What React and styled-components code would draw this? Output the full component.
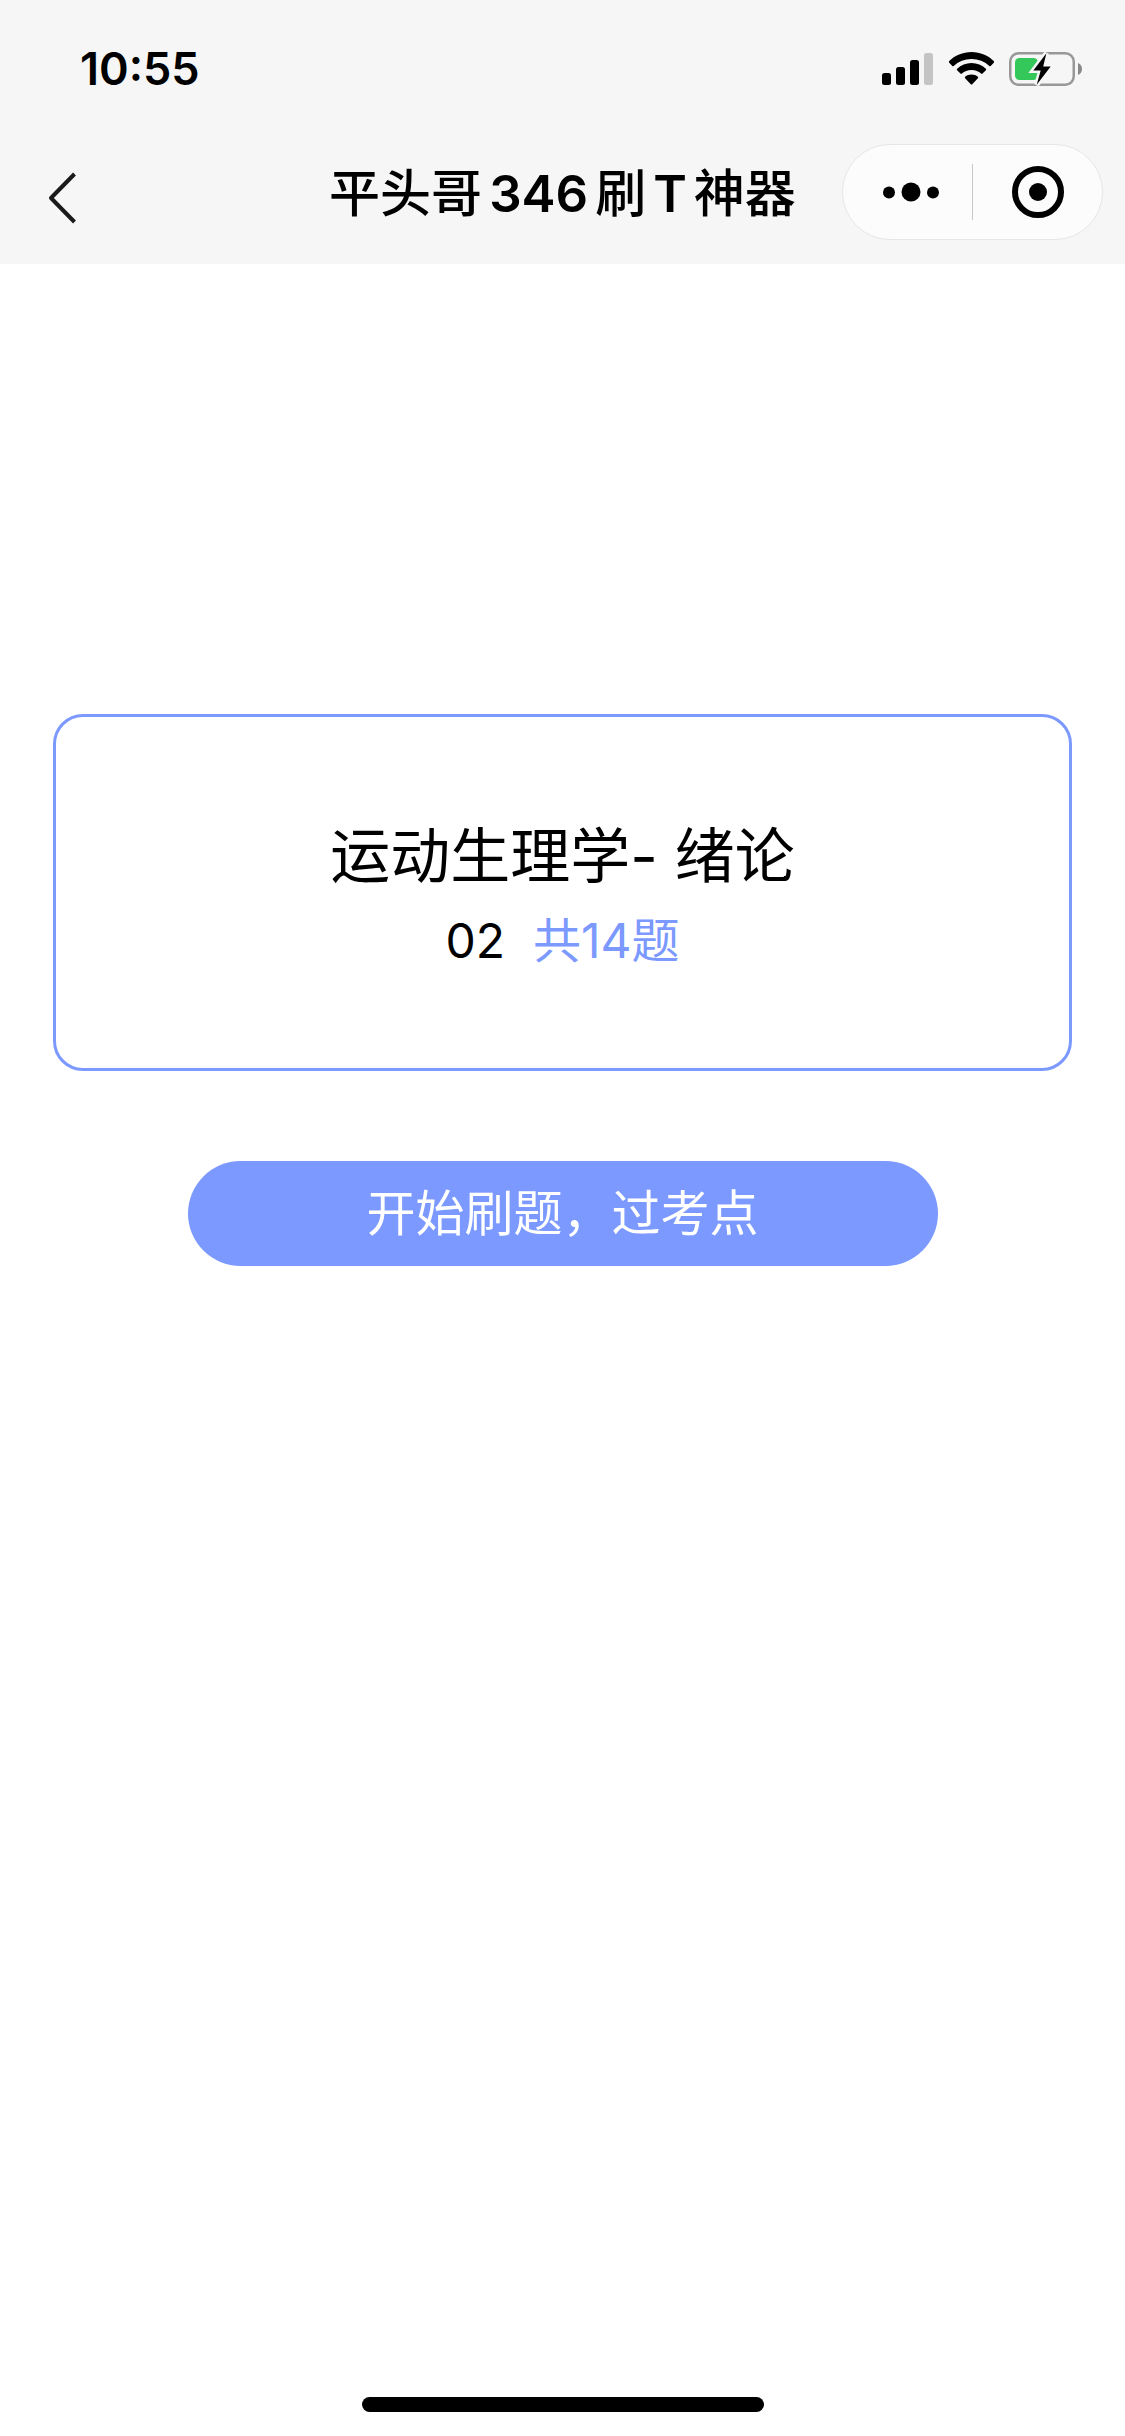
import React from 'react'
import styled, { createGlobalStyle, ThemeProvider } from 'styled-components'

const theme = {
  primary: '#7b99ff',
  barColor: '#f6f6f6',
  capsuleColor: '#fcfcfc',
  capsuleBorder: '#e6e6e6',
  dividerColor: '#c8c8c8',
  fontColor: '#000',
}

const GlobalStyle = createGlobalStyle`
  * {
    box-sizing: border-box;
  }

  body {
    margin: 0;
    background: white;
    font-family: Inter, 'Noto Sans CJK SC', sans-serif;
  }

  button {
    margin: 0;
    padding: 0;
    border: 0;
    background: none;
    color: inherit;
    font: inherit;
    cursor: pointer;
  }

  svg {
    display: block;
  }
`

const Page = styled.div`
  display: flex;
  flex-direction: column;
  min-height: 100vh;
  color: ${props => props.theme.fontColor};
`

const HeaderWrapper = styled.header`
  background: ${props => props.theme.barColor};
`

const StatusBar = styled.div`
  display: flex;
  justify-content: space-between;
  align-items: center;
  height: 120px;
  padding: 18px 43px 0 80px;
`

const Time = styled.time`
  font-size: 45px;
  font-weight: 600;
  line-height: 54px;
`

const StatusIcons = styled.div`
  display: flex;
  align-items: center;
  gap: 15px;
`

const NavBar = styled.nav`
  display: grid;
  grid-template-columns: 1fr auto 1fr;
  align-items: center;
  height: 144px;
  padding: 0 22px;
`

const BackButton = styled.button`
  justify-self: start;
  padding: 12px 26px;
  margin-top: 12px;
`

const Title = styled.h1`
  margin: 0;
  padding-top: 4px;
  font-size: 51px;
  font-weight: 500;
  line-height: 72px;
`

const Latin = styled.span`
  margin: 0 7px;
  font-weight: 600;
`

const Capsule = styled.div`
  display: grid;
  grid-template-columns: 129px 1fr;
  justify-self: end;
  width: 261px;
  height: 96px;
  border: 1px solid ${props => props.theme.capsuleBorder};
  border-radius: 48px;
  background: ${props => props.theme.capsuleColor};
`

const CapsuleButton = styled.button`
  display: flex;
  align-items: center;
  justify-content: center;
  padding-left: 6px;

  & + & {
    position: relative;
    padding-left: 2px;
  }

  & + &::before {
    content: '';
    position: absolute;
    left: 0;
    width: 1px;
    height: 56px;
    background: ${props => props.theme.dividerColor};
  }
`

const Main = styled.main`
  display: flex;
  flex: 1;
  flex-direction: column;
  align-items: center;
  padding: 450px 53px 0;
`

const Card = styled.section`
  width: 100%;
  padding: 94px 24px 87px;
  border: 3px solid ${props => props.theme.primary};
  border-radius: 30px;
  text-align: center;
`

const Chapter = styled.h2`
  margin: 0;
  font-size: 60px;
  font-weight: 400;
  line-height: 90px;
`

const Meta = styled.p`
  display: flex;
  justify-content: center;
  gap: 28px;
  margin: 0;
  font-size: 48px;
  line-height: 80px;
`

const Count = styled.span`
  color: ${props => props.theme.primary};
`

const StartButton = styled.button`
  width: 100%;
  max-width: 750px;
  height: 105px;
  margin-top: 90px;
  border-radius: 53px;
  background: ${props => props.theme.primary};
  color: white;
  font-size: 49px;
  line-height: 72px;
`

const HomeIndicator = styled.div`
  align-self: center;
  width: 402px;
  height: 15px;
  margin-bottom: 24px;
  border-radius: 8px;
  background: black;
`

const SignalIcon = () => (
  <svg width="52" height="34" viewBox="0 0 52 34" aria-hidden="true">
    <rect x="0" y="21" width="9" height="12" rx="2.5" />
    <rect x="14" y="15" width="9" height="18" rx="2.5" />
    <rect x="28" y="8" width="9" height="25" rx="2.5" />
    <rect x="42" y="1" width="9" height="32" rx="2.5" fill="#c4c4c4" />
  </svg>
)

const WifiIcon = () => (
  <svg width="45" height="34" viewBox="0 0 45 34" aria-hidden="true">
    <path d="M22.5 0C31.3 0 39.2 3.500 45 9.200c.4.400.4 1 0 1.400L41.700 13.900c-.4.400-1 .4-1.400 0A26 26 0 0 0 22.500 7 26 26 0 0 0 4.700 13.900c-.4.400-1 .4-1.400 0L0 10.600c-.4-.4-.4-1 0-1.400C5.800 3.500 13.700 0 22.500 0z" />
    <path d="M22.500 11c5.500 0 10.600 2.200 14.400 5.800.4.400.4 1 0 1.400l-3.400 3.400c-.4.400-1 .4-1.400 0A14 14 0 0 0 22.500 18a14 14 0 0 0-9.600 3.600c-.4.400-1 .4-1.400 0l-3.400-3.400c-.4-.4-.4-1 0-1.400A21 21 0 0 1 22.500 11z" />
    <path d="M22.500 22.500c2.500 0 4.700.8 6.400 2.300.4.400.4 1 0 1.400l-5.700 6c-.4.400-1 .4-1.400 0l-5.700-6c-.4-.4-.4-1 0-1.400 1.700-1.500 3.900-2.300 6.400-2.300z" />
  </svg>
)

const BatteryIcon = () => (
  <svg width="73" height="34" viewBox="0 0 73 34" aria-hidden="true">
    <rect x="1.25" y="1.25" width="63.5" height="31.5" rx="8.5" fill="none" stroke="#989898" strokeWidth="2.5" />
    <path d="M69 11c2.500 1 4 3.300 4 6s-1.500 5-4 6z" fill="#888" />
    <rect x="6" y="6" width="23" height="22" rx="4.5" fill="#34c759" />
    <path
      d="M37.4 1.200 24.300 18.600h7.400L27.700 32.800 41.700 14.600h-7.500z"
      fill="#f6f6f6"
      stroke="#f6f6f6"
      strokeWidth="5"
    />
    <path d="M37.4 1.200 24.300 18.600h7.400L27.700 32.800 41.700 14.600h-7.500z" />
  </svg>
)

const BackIcon = () => (
  <svg width="28" height="52" viewBox="0 0 28 52" fill="none" stroke="#1a1a1a" aria-hidden="true">
    <path d="M26.5 2 3 26l23.500 24" strokeWidth="4" strokeLinejoin="round" />
  </svg>
)

const MoreIcon = () => (
  <svg width="56" height="20" viewBox="0 0 56 20" aria-hidden="true">
    <circle cx="6" cy="10.5" r="6" />
    <circle cx="28" cy="10" r="9.5" />
    <circle cx="50" cy="10.5" r="6" />
  </svg>
)

const CloseIcon = () => (
  <svg width="52" height="52" viewBox="0 0 52 52" aria-hidden="true">
    <circle cx="26" cy="26" r="23" fill="none" stroke="black" strokeWidth="6" />
    <circle cx="26" cy="26" r="9" />
  </svg>
)

const Header = () => (
  <HeaderWrapper>
    <StatusBar>
      <Time>10:55</Time>
      <StatusIcons>
        <SignalIcon />
        <WifiIcon />
        <BatteryIcon />
      </StatusIcons>
    </StatusBar>
    <NavBar>
      <BackButton type="button" aria-label="返回">
        <BackIcon />
      </BackButton>
      <Title>
        平头哥<Latin>346</Latin>刷<Latin>T</Latin>神器
      </Title>
      <Capsule>
        <CapsuleButton type="button" aria-label="更多">
          <MoreIcon />
        </CapsuleButton>
        <CapsuleButton type="button" aria-label="关闭">
          <CloseIcon />
        </CapsuleButton>
      </Capsule>
    </NavBar>
  </HeaderWrapper>
)

const App = () => (
  <ThemeProvider theme={theme}>
    <>
      <GlobalStyle />
      <Page>
        <Header />
        <Main>
          <Card>
            <Chapter>运动生理学- 绪论</Chapter>
            <Meta>
              <span>02</span>
              <Count>共14题</Count>
            </Meta>
          </Card>
          <StartButton type="button">开始刷题，过考点</StartButton>
        </Main>
        <HomeIndicator />
      </Page>
    </>
  </ThemeProvider>
)

export default App
